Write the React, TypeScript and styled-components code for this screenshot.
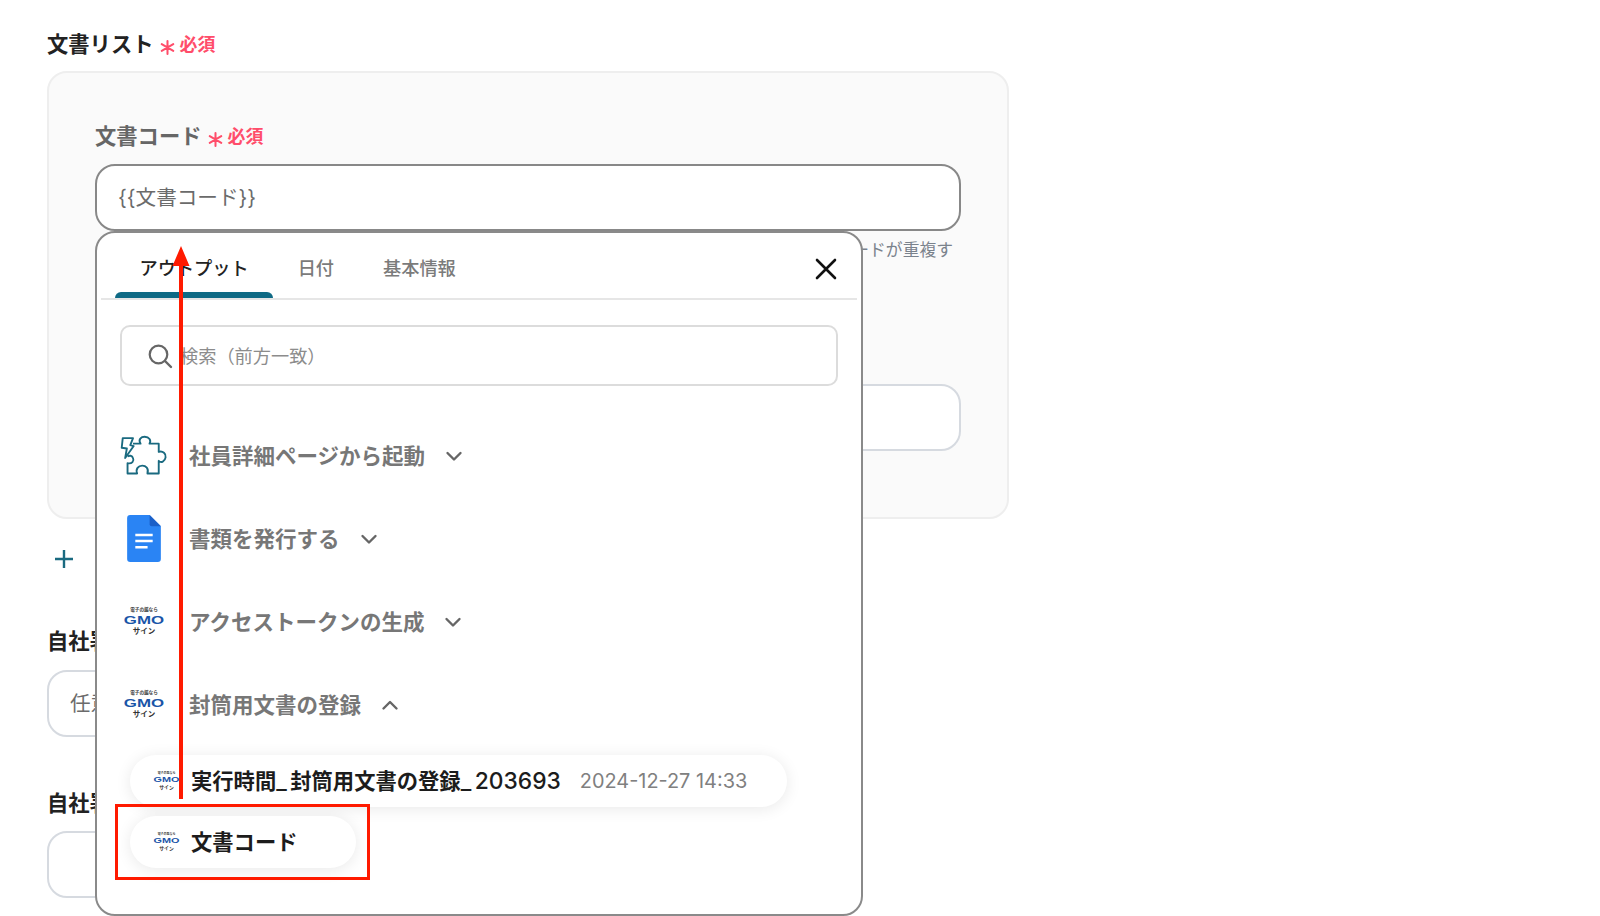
import React from "react";
import styled, { createGlobalStyle } from "styled-components";

const Global = createGlobalStyle`
  html, body { margin: 0; padding: 0; background: #fff; }
  body { font-family: "Inter", "Noto Sans CJK JP", sans-serif; overflow: hidden; }
  * { box-sizing: border-box; }
`;

const Page = styled.div`
  position: relative;
  width: 1600px;
  height: 916px;
  padding: 31px 0 0 47px;
  overflow: hidden;
`;
const Column = styled.div`
  width: 962px;
`;
const LabelRow = styled.div<{ $muted?: boolean; $top?: number }>`
  display: flex;
  align-items: center;
  height: 26px;
  padding-bottom: 4px;
  margin-top: ${(p) => p.$top ?? 0}px;
  font-size: 21.3px;
  font-weight: 700;
  white-space: nowrap;
  color: ${(p) => (p.$muted ? "#666" : "#222")};
`;
const Star = styled.span`
  margin: 10px 0 0 6px;
  width: 15px;
  height: 15px;
  flex: none;
  color: #ff4d6a;
`;
const Required = styled.span`
  margin: 1px 0 0 5px;
  font-size: 17.9px;
  font-weight: 700;
  color: #ff4d6a;
`;
const Card = styled.div`
  margin-top: 14px;
  height: 448px;
  padding: 50px 46px 0;
  background: #fafafa;
  border: 2px solid #eeeeee;
  border-radius: 20px;
`;
const Input = styled.div<{ $strong?: boolean; $top?: number; $short?: boolean }>`
  display: flex;
  align-items: center;
  height: 67px;
  width: ${(p) => (p.$short ? "780px" : "auto")};
  margin-top: ${(p) => p.$top ?? 15}px;
  padding: 0 0 4px 21px;
  background: #fff;
  border: 2px solid ${(p) => (p.$strong ? "#888" : "#d6dae0")};
  border-radius: 20px;
  font-size: 20.6px;
  color: #6b6b6b;
`;
const Helper = styled.div`
  height: 24px;
  margin-top: 7px;
  padding-right: 8px;
  text-align: right;
  font-size: 16.8px;
  line-height: 24px;
  color: #7a828c;
  white-space: nowrap;
`;
const AddRow = styled.div`
  display: flex;
  align-items: center;
  gap: 20px;
  height: 30px;
  margin-top: 25px;
  padding-left: 6px;
  color: #1a6a80;
  font-size: 20px;
`;

const Popup = styled.div`
  position: absolute;
  left: 95px;
  top: 231px;
  width: 768px;
  height: 685px;
  background: #fff;
  border: 2px solid #8a8a8a;
  border-radius: 20px;
  padding: 0 4px;
`;
const TabBar = styled.div`
  display: flex;
  align-items: center;
  height: 67px;
  padding: 0 14px;
  border-bottom: 2px solid #e6e6e6;
`;
const Tab = styled.div<{ $active?: boolean }>`
  position: relative;
  display: flex;
  align-items: center;
  height: 100%;
  padding: 3px 24.5px 0;
  font-size: 18.2px;
  font-weight: 500;
  color: ${(p) => (p.$active ? "#222" : "#7b7b7b")};
  ${(p) =>
    p.$active &&
    `&::after {
      content: "";
      position: absolute;
      left: 0; right: 0; bottom: 0;
      height: 6px;
      background: #0f6a85;
      border-radius: 6px 6px 0 0;
    }`}
`;
const Close = styled.div`
  margin: 6px 5px 0 auto;
  width: 24px;
  height: 24px;
  display: flex;
`;
const Search = styled.div`
  display: flex;
  align-items: center;
  height: 61px;
  margin: 25px 19px 0 19px;
  padding-left: 25px;
  gap: 7px;
  border: 2px solid #dcdcdc;
  border-radius: 10px;
  font-size: 18.2px;
  color: #8c8c8c;
`;
const SearchText = styled.span`
  margin-bottom: 2px;
`;
const Rows = styled.div`
  margin-top: 28px;
  padding-left: 19px;
`;
const Row = styled.div`
  display: flex;
  align-items: center;
  height: 83px;
  gap: 21px;
  font-size: 21.5px;
  font-weight: 700;
  color: #777;
`;
const RowText = styled.span`
  margin-bottom: 3px;
`;
const IconBox = styled.div`
  width: 48px;
  height: 48px;
  flex: none;
  display: flex;
  align-items: center;
  justify-content: center;
`;
const Chevron = styled.svg`
  width: 18px;
  height: 18px;
  flex: none;
  margin-left: -1px;
`;
const Pills = styled.div`
  display: flex;
  flex-direction: column;
  align-items: flex-start;
  gap: 9px;
  margin: 9px 0 0 29px;
`;
const Pill = styled.div<{ $end: number }>`
  display: flex;
  align-items: center;
  height: 52px;
  padding: 0 ${(p) => p.$end}px 0 23px;
  gap: 11px;
  background: #fff;
  border-radius: 26px;
  box-shadow: 0 2px 16px rgba(0, 0, 0, 0.09);
  font-size: 21.3px;
  font-weight: 700;
  color: #1c1c1c;
  white-space: nowrap;
`;
const PillText = styled.span`
  margin-bottom: 4px;
`;
const Latin = styled.span`
  font-size: 22.8px;
  font-weight: 500;
`;
const Underscore = styled(Latin)`
  letter-spacing: 3.5px;
`;
const PillTime = styled.span`
  margin-left: 8px;
  font-size: 19.9px;
  font-weight: 400;
  color: #808080;
`;
const RedBox = styled.div`
  position: absolute;
  left: 115px;
  top: 804px;
  width: 255px;
  height: 76px;
  border: 3px solid #ff1a00;
`;
const ArrowSvg = styled.svg`
  position: absolute;
  left: 172px;
  top: 245px;
`;

const Asterisk = () => (
  <Star as="svg" viewBox="0 0 14 14">
    <path d="M7 1v12M1.6 3.9l10.8 6.2M12.4 3.9L1.6 10.1" stroke="currentColor" strokeWidth="1.9" strokeLinecap="round" />
  </Star>
);

const Down = () => (
  <Chevron viewBox="0 0 18 18">
    <path d="M2.5 6l6.5 6.5L15.5 6" fill="none" stroke="#666" strokeWidth="2.4" strokeLinecap="round" strokeLinejoin="round" />
  </Chevron>
);
const Up = () => (
  <Chevron viewBox="0 0 18 18">
    <path d="M2.5 12.5L9 6l6.5 6.5" fill="none" stroke="#666" strokeWidth="2.4" strokeLinecap="round" strokeLinejoin="round" />
  </Chevron>
);

const PuzzleIcon = () => (
  <svg width="48" height="42" viewBox="20 25 140 118">
    <path
      d="M58 48L80 48C72 35 82 28 92 28C105 28 112 38 106 48L133 48L133 72C145 68 155 78 153 88C151 100 140 105 133 98L133 135L100 135C105 120 95 112 85 112C73 112 65 122 70 135L42 135L42 105C55 108 62 98 58 90C55 82 48 82 42 85"
      fill="none"
      stroke="#1a6a80"
      strokeWidth="5.5"
      strokeLinejoin="round"
    />
    <path d="M28 32L58 32L50 52L60 55L35 90L40 62L25 60Z" fill="#fff" stroke="#1a6a80" strokeWidth="5.5" strokeLinejoin="round" />
  </svg>
);

const DocIcon = () => (
  <svg width="34" height="47" viewBox="0 0 33 46">
    <path d="M3 0H22L33 11V43A3 3 0 0 1 30 46H3A3 3 0 0 1 0 43V3A3 3 0 0 1 3 0Z" fill="#2a84f4" />
    <path d="M22 0L33 11H24A2 2 0 0 1 22 9Z" fill="#1a5fc8" />
    <path d="M8 19.5H25M8 25.5H25M8 31.5H20" stroke="#fff" strokeWidth="2.4" />
  </svg>
);

const GmoLogo = ({ w }: { w: number }) => (
  <svg width={w} height={w * 0.72} viewBox="0 0 50 36">
    <text x="25" y="5.5" textAnchor="middle" fontSize="5.5" fill="#444" fontFamily="Noto Sans CJK JP, sans-serif">電子の鑑なら</text>
    <text x="25" y="21" textAnchor="middle" fontSize="14" fontWeight="700" fill="#1a55a8" textLength="48" lengthAdjust="spacingAndGlyphs" fontFamily="Liberation Sans, sans-serif">GMO</text>
    <text x="25" y="33" textAnchor="middle" fontSize="9" fontWeight="700" fill="#333" fontFamily="Noto Sans CJK JP, sans-serif">サイン</text>
  </svg>
);

export default function App() {
  return (
    <>
      <Global />
      <Page>
        <Column>
          <LabelRow>
            文書リスト
            <Asterisk />
            <Required>必須</Required>
          </LabelRow>
          <Card>
            <LabelRow $muted>
              文書コード
              <Asterisk />
              <Required>必須</Required>
            </LabelRow>
            <Input $strong>{"{{文書コード}}"}</Input>
            <Helper>文書コードが重複す</Helper>
            <Input $top={122} />
          </Card>
          <AddRow>
            <svg width="22" height="22" viewBox="0 0 22 22">
              <path d="M11 2V20M2 11H20" stroke="#1a6a80" strokeWidth="2.4" />
            </svg>
            追加
          </AddRow>
          <LabelRow $top={54}>自社署名者名</LabelRow>
          <Input $short $top={16}>任意の値</Input>
          <LabelRow $top={53}>自社署名者</LabelRow>
          <Input $short $top={15} />
        </Column>

        <Popup>
          <TabBar>
            <Tab $active>アウトプット</Tab>
            <Tab>日付</Tab>
            <Tab>基本情報</Tab>
            <Close>
              <svg width="24" height="24" viewBox="0 0 24 24">
                <path d="M3 3L21 21M21 3L3 21" stroke="#111" strokeWidth="2.6" strokeLinecap="round" />
              </svg>
            </Close>
          </TabBar>
          <Search>
            <svg width="26" height="26" viewBox="0 0 26 26">
              <circle cx="11.5" cy="11.5" r="8.8" fill="none" stroke="#666" strokeWidth="2.2" />
              <path d="M18 18L24 24" stroke="#666" strokeWidth="2.4" strokeLinecap="round" />
            </svg>
            <SearchText>検索（前方一致）</SearchText>
          </Search>
          <Rows>
            <Row>
              <IconBox><PuzzleIcon /></IconBox>
              <RowText>社員詳細ページから起動</RowText>
              <Down />
            </Row>
            <Row>
              <IconBox><DocIcon /></IconBox>
              <RowText>書類を発行する</RowText>
              <Down />
            </Row>
            <Row>
              <IconBox><GmoLogo w={42} /></IconBox>
              <RowText>アクセストークンの生成</RowText>
              <Down />
            </Row>
            <Row>
              <IconBox><GmoLogo w={42} /></IconBox>
              <RowText>封筒用文書の登録</RowText>
              <Up />
            </Row>
          </Rows>
          <Pills>
            <Pill $end={40}>
              <GmoLogo w={27} />
              <PillText>
                実行時間<Underscore>_</Underscore>封筒用文書の登録<Underscore>_</Underscore><Latin>203693</Latin>
              </PillText>
              <PillTime>2024-12-27 14:33</PillTime>
            </Pill>
            <Pill $end={58}>
              <GmoLogo w={27} />
              <PillText>文書コード</PillText>
            </Pill>
          </Pills>
        </Popup>

        <RedBox />
        <ArrowSvg width="18" height="555" viewBox="0 0 18 555">
          <path d="M9 1L17.5 21H11V554H7V21H0.5Z" fill="#ff1a00" />
        </ArrowSvg>
      </Page>
    </>
  );
}
